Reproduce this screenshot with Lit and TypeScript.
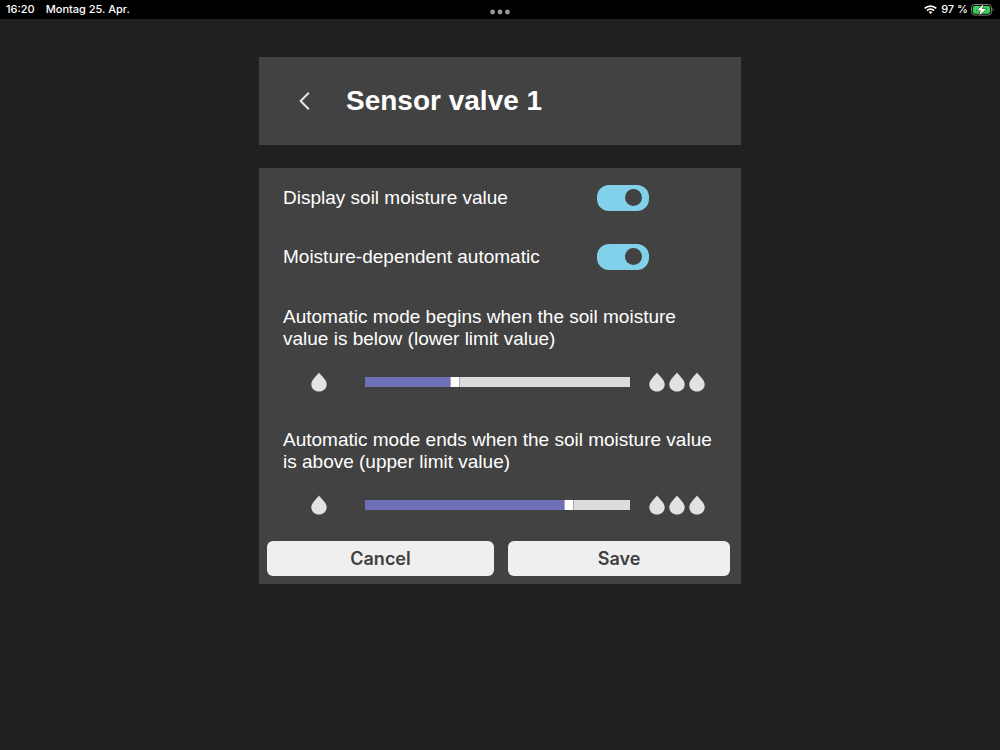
import { LitElement, html, css, svg } from "lit";
import { customElement, property, state } from "lit/decorators.js";
import { styleMap } from "lit/directives/style-map.js";

@customElement("status-bar")
class StatusBar extends LitElement {
  static styles = css`
    :host {
      display: grid;
      grid-template-columns: 1fr auto 1fr;
      align-items: center;
      height: 19px;
      padding: 0 6px;
      background: #000;
      color: #fff;
      font: 500 11px/19px Inter, "Liberation Sans", sans-serif;
    }
    .left {
      display: flex;
      gap: 11px;
    }
    .right {
      display: flex;
      align-items: center;
      justify-content: flex-end;
      gap: 4px;
    }
    .dots {
      display: block;
      padding-top: 5px;
    }
    .power {
      display: flex;
      align-items: center;
      gap: 3px;
    }
    svg {
      display: block;
    }
  `;

  render() {
    return html`
      <div class="left"><span>16:20</span><span>Montag 25. Apr.</span></div>
      <svg class="dots" width="20" height="6" viewBox="0 0 20 6" fill="#9a9a9a">
        <circle cx="2.6" cy="3" r="2.4" /><circle cx="10" cy="3" r="2.4" /><circle cx="17.4" cy="3" r="2.4" />
      </svg>
      <div class="right">
        <svg width="13" height="9" viewBox="0 0 13 9" fill="none" stroke="#fff" stroke-width="1.7">
          <path d="M0.7 3.4A8.3 8.3 0 0 1 12.3 3.4" />
          <path d="M2.9 5.7A5.1 5.1 0 0 1 10.1 5.7" />
          <path d="M6.5 9L4.6 7.1A2.7 2.7 0 0 1 8.4 7.1Z" fill="#fff" stroke="none" />
        </svg>
        <div class="power">
          <span>97 %</span>
          <svg width="23" height="12" viewBox="0 0 23 12">
            <rect x="0.5" y="0.5" width="20" height="10.6" rx="3.2" fill="none" stroke="#7c7c7c" stroke-width="1" />
            <rect x="1.9" y="1.9" width="17.2" height="7.8" rx="1.9" fill="#34d158" />
            <path d="M21.6 4.1C22.9 4.5 22.9 7.1 21.6 7.5Z" fill="#7c7c7c" />
            <path d="M12.6 0.3L5.6 6.4H9.7L8.2 11.4L15.4 5.1H11.2Z" fill="#fff" stroke="#000" stroke-width="0.8" paint-order="stroke" />
          </svg>
        </div>
      </div>
    `;
  }
}

@customElement("toggle-row")
class ToggleRow extends LitElement {
  @property() label = "";
  @property({ type: Boolean }) checked = false;

  static styles = css`
    :host {
      display: block;
    }
    .row {
      display: grid;
      grid-template-columns: 1fr 144px;
      align-items: center;
      height: 59px;
    }
    .text {
      padding-left: 24px;
    }
    .switch {
      appearance: none;
      display: flex;
      align-items: center;
      box-sizing: border-box;
      width: 52px;
      height: 26px;
      margin: 0;
      padding: 0 7px;
      border-radius: 12px;
      background: #9a9a9a;
      cursor: pointer;
    }
    .switch::before {
      content: "";
      width: 17px;
      height: 17px;
      border-radius: 50%;
      background: #424242;
    }
    .switch:checked {
      justify-content: flex-end;
      background: #81d1ea;
    }
  `;

  render() {
    return html`
      <div class="row">
        <label class="text" for="switch">${this.label}</label>
        <input
          class="switch"
          id="switch"
          type="checkbox"
          role="switch"
          .checked=${this.checked}
          @change=${(e: Event) => (this.checked = (e.target as HTMLInputElement).checked)}
        />
      </div>
    `;
  }
}

@customElement("moisture-slider")
class MoistureSlider extends LitElement {
  @property() label = "";
  @property({ type: Number }) value = 0;

  static styles = css`
    :host {
      display: block;
      padding: 0 24px;
    }
    .text {
      display: block;
      line-height: 22px;
    }
    .scale {
      display: grid;
      grid-template-columns: 82px 1fr 87px;
      align-items: center;
      height: 64px;
    }
    .low {
      padding-left: 28px;
    }
    .high {
      display: flex;
      gap: 4px;
      padding-left: 19px;
    }
    .drop {
      display: block;
      flex: none;
    }
    .slider {
      appearance: none;
      width: 100%;
      height: 10px;
      margin: 0;
      background: linear-gradient(#6d70b7, #6d70b7) 0 0 / var(--fill) 100% no-repeat #dcdcdc;
      cursor: pointer;
    }
    .slider::-webkit-slider-thumb {
      appearance: none;
      box-sizing: border-box;
      width: 10px;
      height: 10px;
      border: solid #a9a9a9;
      border-width: 0 1px;
      border-radius: 0;
      background: #fff;
    }
  `;

  private drop() {
    return html`<svg class="drop" width="16" height="20" viewBox="0 0 16 20" aria-hidden="true">
      ${svg`<path d="M8 0.6C9 2.1 11 3.9 12.9 6.2C14.6 8.3 15.7 10.1 15.7 12.2C15.7 16.4 12.4 19.5 8 19.5S0.3 16.4 0.3 12.2C0.3 10.1 1.4 8.3 3.1 6.2C5 3.9 7 2.1 8 0.6Z" fill="#e2e2e0" />`}
    </svg>`;
  }

  render() {
    return html`
      <label class="text" for="slider">${this.label}</label>
      <div class="scale">
        <div class="low">${this.drop()}</div>
        <input
          class="slider"
          id="slider"
          type="range"
          min="0"
          max="100"
          step="0.5"
          .value=${String(this.value)}
          style=${styleMap({ "--fill": `${this.value}%` })}
          @input=${(e: Event) => (this.value = Number((e.target as HTMLInputElement).value))}
        />
        <div class="high">${[0, 1, 2].map(() => this.drop())}</div>
      </div>
    `;
  }
}

@customElement("app-root")
class AppRoot extends LitElement {
  @state() private lower = 33.5;
  @state() private upper = 78;

  static styles = css`
    :host {
      display: block;
      min-height: 100vh;
      background: #202020;
      color: #fff;
      font: 19px/22px "Liberation Sans", Arial, sans-serif;
    }
    .page {
      display: flex;
      flex-direction: column;
      gap: 23px;
      width: 100%;
      max-width: 482px;
      margin: 0 auto;
      padding-top: 38px;
    }
    .header {
      display: flex;
      align-items: center;
      gap: 25px;
      height: 88px;
      padding-left: 29px;
      background: #424242;
    }
    .back {
      display: grid;
      place-items: center;
      width: 33px;
      height: 40px;
      padding: 0;
      border: 0;
      background: none;
      cursor: pointer;
    }
    .title {
      margin: 0;
      font-size: 28px;
      line-height: 32px;
      font-weight: 700;
    }
    .panel {
      display: flex;
      flex-direction: column;
      padding-bottom: 8px;
      background: #424242;
    }
    .limits {
      display: flex;
      flex-direction: column;
      gap: 15px;
      padding: 20px 0 4px;
    }
    .actions {
      display: grid;
      grid-template-columns: 227fr 222fr;
      gap: 14px;
      padding: 0 11px 0 8px;
    }
    .button {
      height: 35px;
      padding: 0;
      border: 0;
      border-radius: 6px;
      background: #efefef;
      color: #404040;
      font: 600 18px/22px Inter, "Liberation Sans", sans-serif;
      cursor: pointer;
    }
  `;

  render() {
    return html`
      <status-bar></status-bar>
      <main class="page">
        <header class="header">
          <button class="back" aria-label="Back">
            <svg width="11" height="18" viewBox="0 0 11 18" fill="none" stroke="#e6e6e6" stroke-width="2">
              <path d="M9.8 0.8L1.6 9L9.8 17.2" />
            </svg>
          </button>
          <h1 class="title">Sensor valve 1</h1>
        </header>
        <section class="panel">
          <toggle-row label="Display soil moisture value" checked></toggle-row>
          <toggle-row label="Moisture-dependent automatic" checked></toggle-row>
          <div class="limits">
            <moisture-slider
              label="Automatic mode begins when the soil moisture value is below (lower limit value)"
              .value=${this.lower}
            ></moisture-slider>
            <moisture-slider
              label="Automatic mode ends when the soil moisture value is above (upper limit value)"
              .value=${this.upper}
            ></moisture-slider>
          </div>
          <div class="actions">
            <button class="button">Cancel</button>
            <button class="button">Save</button>
          </div>
        </section>
      </main>
    `;
  }
}
